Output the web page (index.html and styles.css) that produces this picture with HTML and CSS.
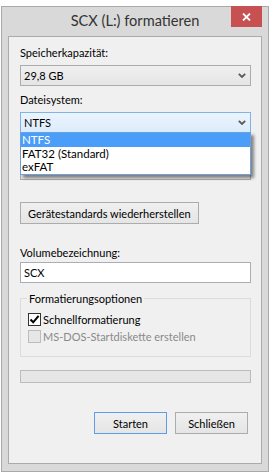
FILE: index.html
```html
<!DOCTYPE html>
<html lang="de">
<head>
    <meta charset="UTF-8">
    <meta name="viewport" content="width=device-width, initial-scale=1.0">
    <title>SCX (L:) formatieren</title>
    <link rel="stylesheet" href="styles.css">
</head>
<body>
    <div class="window">
        <div class="titlebar">
            <span class="title">SCX (L:) formatieren</span>
            <span class="close-btn">
                <svg width="9" height="8" viewBox="0 0 9 8"><path d="M1 0.5 L8 7.5 M8 0.5 L1 7.5" stroke="#fff" stroke-width="1.8" fill="none"/></svg>
            </span>
        </div>

        <div class="client">
            <div class="field">
                <label class="field-label">Speicherkapazität:</label>
                <div class="combo">
                    <span>29,8 GB</span>
                    <svg class="chevron" width="8" height="5" viewBox="0 0 8 5"><path d="M0.8 0.8 L4 4 L7.2 0.8" stroke="#5a5a5a" stroke-width="1.8" fill="none"/></svg>
                </div>
            </div>

            <div class="field">
                <label class="field-label">Dateisystem:</label>
                <div class="combo-wrap">
                    <div class="combo combo-open">
                        <span>NTFS</span>
                        <svg class="chevron" width="8" height="5" viewBox="0 0 8 5"><path d="M0.8 0.8 L4 4 L7.2 0.8" stroke="#5a5a5a" stroke-width="1.8" fill="none"/></svg>
                    </div>
                    <ul class="droplist">
                        <li class="selected">NTFS</li>
                        <li>FAT32 (Standard)</li>
                        <li>exFAT</li>
                    </ul>
                </div>
            </div>

            <!-- hidden behind the open list -->
            <div class="field covered">
                <label class="field-label">Größe der Zuordnungseinheiten:</label>
                <div class="combo">
                    <span>4096 Bytes</span>
                    <svg class="chevron" width="8" height="5" viewBox="0 0 8 5"><path d="M0.8 0.8 L4 4 L7.2 0.8" stroke="#5a5a5a" stroke-width="1.8" fill="none"/></svg>
                </div>
            </div>

            <button class="btn btn-restore">Gerätestandards wiederherstellen</button>

            <label class="field-label label-volume">Volumebezeichnung:</label>
            <div class="textbox">SCX</div>

            <fieldset class="group">
                <legend>Formatierungsoptionen</legend>
                <div class="check-row">
                    <span class="checkbox">
                        <svg width="11" height="11" viewBox="0 0 11 11"><path d="M1.5 5.5 L4.2 8.3 L9.6 1.8" stroke="#000" stroke-width="2" fill="none"/></svg>
                    </span>
                    Schnellformatierung
                </div>
                <div class="check-row disabled">
                    <span class="checkbox"></span>
                    MS-DOS-Startdiskette erstellen
                </div>
            </fieldset>

            <div class="progress"></div>

            <div class="actions">
                <button class="btn btn-default">Starten</button>
                <button class="btn">Schließen</button>
            </div>
        </div>
    </div>
</body>
</html>
```

FILE: styles.css
```css
html, body {
    margin: 0;
    padding: 0;
    background: #ffffff;
    font-family: Lato, "Liberation Sans", sans-serif;
    font-size: 11px;
    color: #000000;
}

.window {
    box-sizing: border-box;
    width: 268px;
    height: 466px;
    margin: 6px 0 0 1px;
    border: 1px solid #a9a9a9;
    background: #d9d9d9;
    display: flex;
    flex-direction: column;
}

.titlebar {
    position: relative;
    height: 29px;
    display: flex;
    justify-content: center;
}

.title {
    margin-top: 4px;
    font-size: 14.6px;
    line-height: 20px;
    color: #333333;
}

.close-btn {
    position: absolute;
    top: -1px;
    right: 6px;
    width: 31px;
    height: 21px;
    background: #c75050;
    display: flex;
    align-items: center;
    justify-content: center;
}

.client {
    flex: 1;
    margin: 0 6px 7px;
    border: 1px solid #ababab;
    background: #f0f0f0;
    padding: 8px 10px 0 11px;
}

.field-label {
    display: block;
    line-height: 15px;
}

.field + .field {
    margin-top: 6px;
}

.combo {
    box-sizing: border-box;
    height: 21px;
    margin-top: 5px;
    padding: 0 4px 0 3px;
    border: 1px solid #acacac;
    background: linear-gradient(#f0f0f0, #e5e5e5);
    display: flex;
    align-items: center;
    justify-content: space-between;
}

.covered .field-label,
.covered .combo span {
    visibility: hidden;
}

.combo-wrap {
    position: relative;
}

.combo-open {
    border-color: #7eb4ea;
    background: linear-gradient(#ecf4fc, #dcecfc);
}

.droplist {
    position: absolute;
    top: 20px;
    left: 0;
    right: 0;
    margin: 0;
    padding: 0;
    list-style: none;
    background: #ffffff;
    border: 1px solid #6d9fd9;
    box-shadow: 3px 3px 3px rgba(0, 0, 0, 0.45);
    z-index: 2;
}

.droplist li {
    height: 13.5px;
    line-height: 13.5px;
    padding-left: 1px;
    font-size: 11.5px;
}

.droplist li.selected {
    background: #4a9ef9;
    color: #ffffff;
}

.btn {
    box-sizing: border-box;
    height: 22px;
    padding: 0 7px;
    border: 1px solid #acacac;
    background: linear-gradient(#f0f0f0, #e5e5e5);
    font-family: inherit;
    font-size: 11px;
    color: #000000;
}

.btn-restore {
    display: block;
    margin-top: 22px;
}

.btn-default {
    border-color: #5d9fe6;
}

.label-volume {
    margin-top: 21px;
}

.textbox {
    box-sizing: border-box;
    height: 21px;
    margin-top: 2px;
    padding-left: 3px;
    border: 1px solid #abadb3;
    background: #ffffff;
    line-height: 19px;
}

.group {
    margin: 8px 0 0;
    padding: 5px 0 11px 6px;
    border: 1px solid #dcdcdc;
    min-width: 0;
}

.group legend {
    padding: 0 2px;
    line-height: 15px;
}

.check-row {
    height: 17px;
    display: flex;
    align-items: center;
    gap: 2px;
}

.checkbox {
    box-sizing: border-box;
    width: 13px;
    height: 13px;
    margin-left: 1px;
    border: 1px solid #333333;
    background: #ffffff;
    display: flex;
    align-items: center;
    justify-content: center;
}

.disabled {
    color: #8a8a8a;
}

.disabled .checkbox {
    border-color: #bcbcbc;
    background: #e6e6e6;
}

.progress {
    box-sizing: border-box;
    height: 13px;
    margin-top: 13px;
    border: 1px solid #bcbcbc;
    background: #e6e6e6;
}

.actions {
    margin-top: 29px;
    padding-right: 3px;
    display: flex;
    justify-content: flex-end;
    gap: 8px;
}

.actions .btn {
    width: 73px;
}
```
